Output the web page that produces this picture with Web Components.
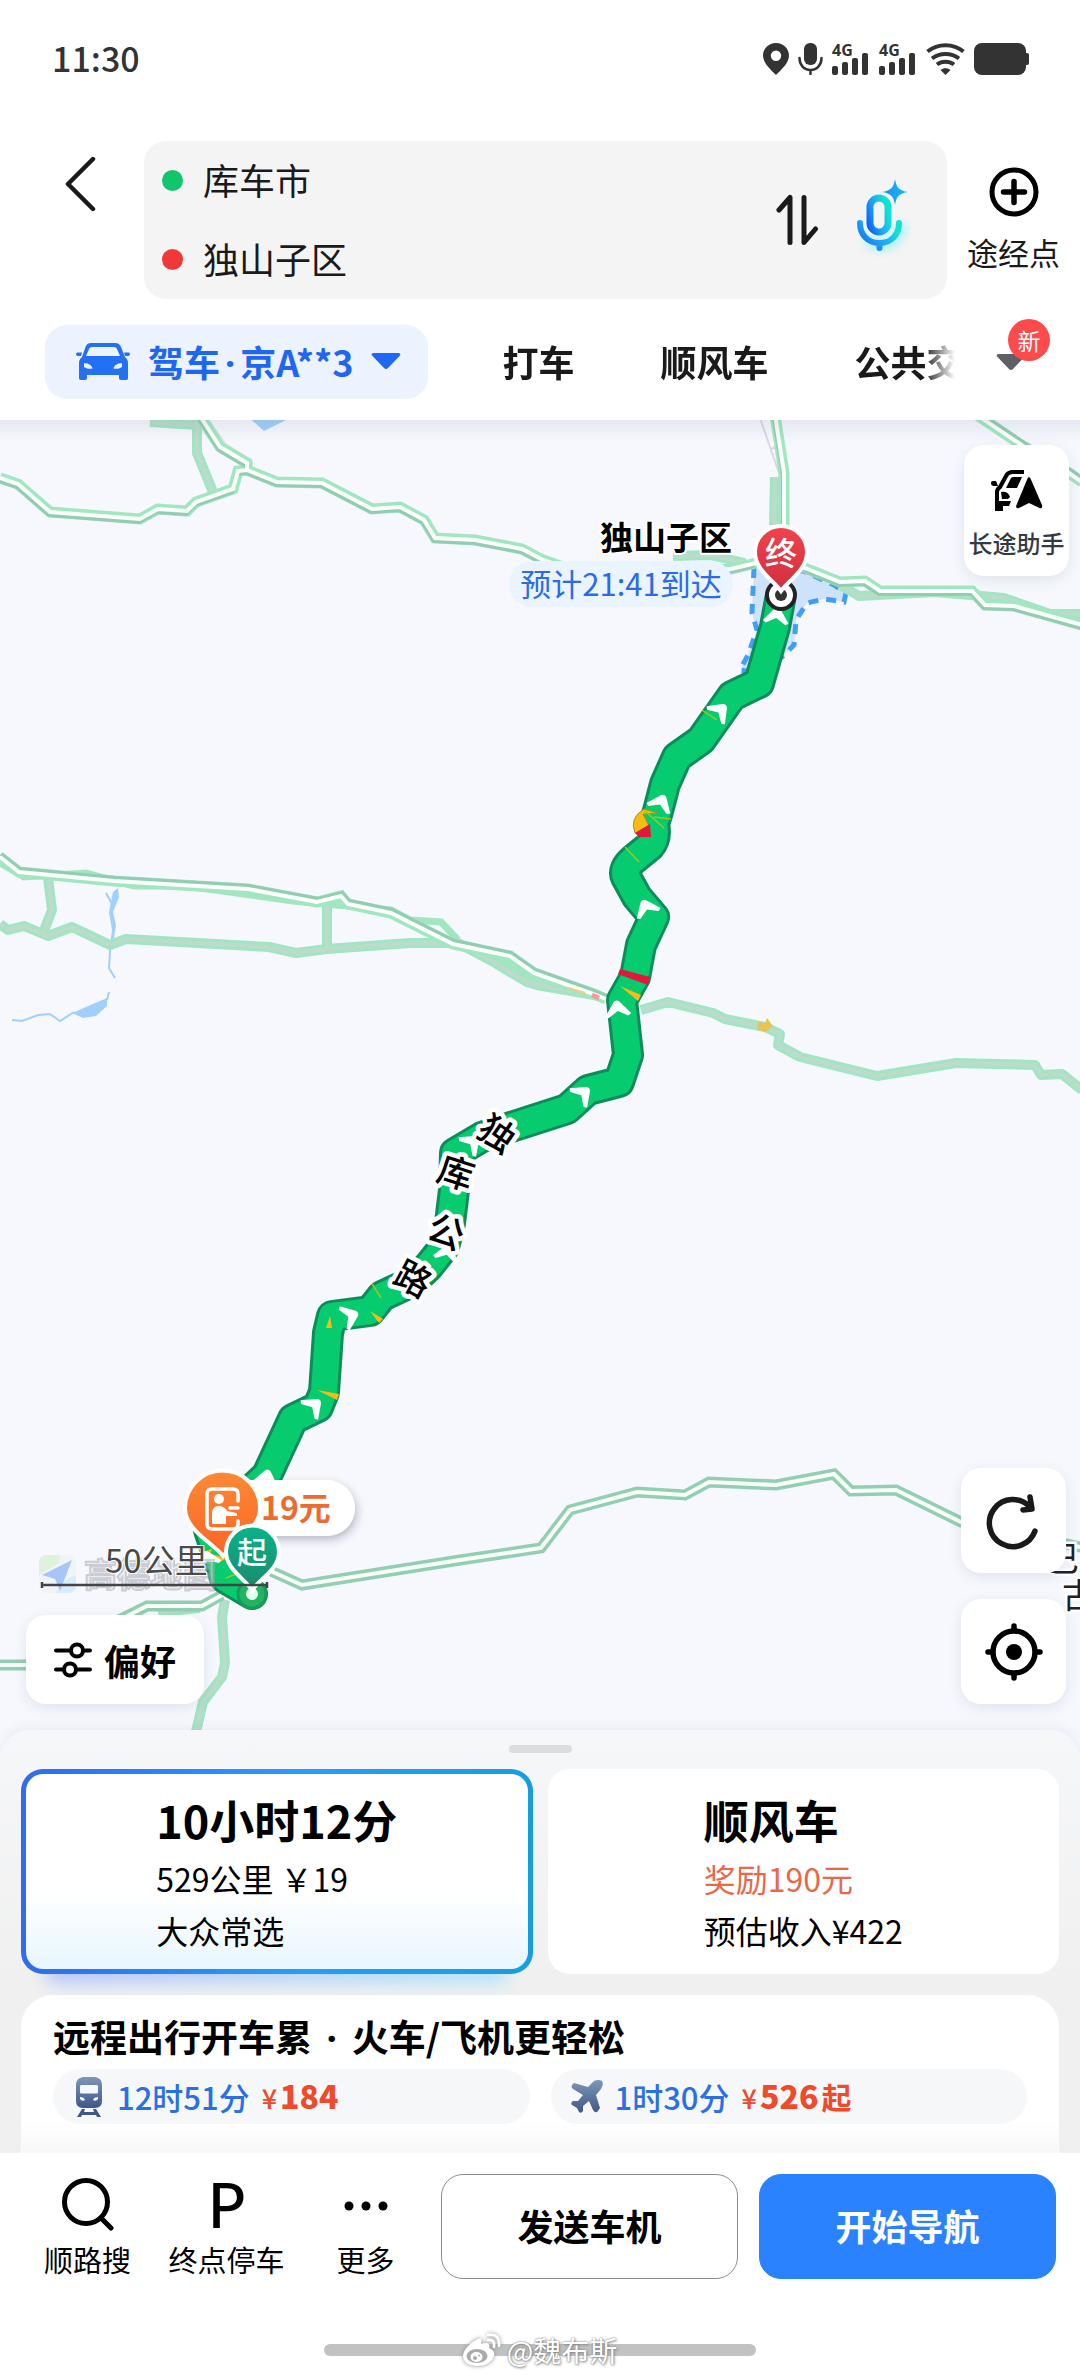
<!DOCTYPE html>
<html lang="zh-CN">
<head>
<meta charset="utf-8">
<meta name="viewport" content="width=device-width, initial-scale=1">
<title>路线规划</title>
<style>
  html, body { margin: 0; }
  body {
    min-height: 100vh;
    background: #fff;
    color: #111;
    font-family: "Noto Sans CJK SC", "Noto Sans", sans-serif;
  }
</style>
</head>
<body>
<route-page></route-page>

<script>
  // every element gets an open shadow root with its own css and html
  function define(tag, css, html) {
    const tpl = document.createElement('template');
    const reset = `
      * { box-sizing: border-box; }
      button, input { font: inherit; color: inherit; background: none; border: 0; padding: 0; margin: 0; outline: 0; }
      svg { display: block; flex: none; }
      .dot { font-family: "Noto Sans", sans-serif; line-height: 1; padding: 0 5px; }
    `;
    tpl.innerHTML = `<style>${reset}${css}</style>${html}`;

    customElements.define(tag, class extends HTMLElement {
      constructor() {
        super();
        this.attachShadow({ mode: 'open' }).appendChild(tpl.content.cloneNode(true));
      }
    });
  }

  /* ---------- status bar ---------- */

  const signal = `
    <div class="signal">
      <span>4G</span>
      <svg width="36" height="22" viewBox="0 0 36 22" fill="#333">
        <rect x="0" y="13" width="6" height="9" rx="2"/><rect x="10" y="9" width="6" height="13" rx="2"/>
        <rect x="20" y="5" width="6" height="17" rx="2"/><rect x="30" y="0" width="6" height="22" rx="2"/>
      </svg>
    </div>`;

  define('status-bar', `
    :host { display: flex; align-items: center; justify-content: space-between; height: 118px; padding: 0 50px 0 52px; color: #333; }
    time { font-size: 34px; line-height: 40px; font-weight: 500; padding-bottom: 2px; }
    .icons { display: flex; align-items: center; gap: 9px; }
    .signal { position: relative; width: 38px; height: 32px; display: flex; align-items: flex-end; }
    .signal span { position: absolute; left: 0; top: 0; font: 700 16px/14px "Noto Sans", sans-serif; }
  `, `
    <time>11:30</time>
    <div class="icons">
      <svg width="26" height="32" viewBox="0 0 26 32"><path fill="#333" fill-rule="evenodd" d="M13 0C5.500 0 0 5.600 0 12.500 0 20 8 27 13 32 18 27 26 20 26 12.500 26 5.600 20.500 0 13 0ZM13 7.500a5.200 5.200 0 1 1 0 10.400 5.200 5.200 0 0 1 0-10.400Z"/></svg>
      <svg width="25" height="32" viewBox="0 0 25 32" fill="none" stroke="#333" stroke-width="2.500" stroke-linecap="round"><rect x="6" y="0" width="13" height="22" rx="6" fill="#333" stroke="none"/><path d="M1.500 15c0 7 4.500 12 11 12s11-5 11-12M12.500 27v4"/></svg>
      ${signal}${signal}
      <svg width="39" height="32" viewBox="0 0 39 32" fill="none" stroke="#333" stroke-width="4"><path d="M1.500 8.500C12 0 27 0 37.500 8.500M6 15.500c8-6 19-6 27 0M11 21.500c5-3.800 12-3.800 17 0"/><path d="M14.500 27c3-2.500 7-2.500 10 0l-5 5z" fill="#333" stroke="none"/></svg>
      <svg width="56" height="32" viewBox="0 0 56 32" fill="#333"><rect width="52" height="32" rx="8"/><rect x="50" y="10" width="5" height="12" rx="2"/></svg>
    </div>
  `);

  /* ---------- start / destination box ---------- */

  define('route-search', `
    :host { display: flex; align-items: flex-start; padding-top: 23px; }
    .back { flex: none; width: 80px; margin: 16px 24px 0 40px; }
    .back svg { margin: 0 auto; }
    .box { flex: 1; min-width: 0; display: flex; align-items: center; padding: 0 36px 0 18px; background: #f4f4f4; border-radius: 22px; }
    .fields { flex: 1; min-width: 0; }
    label { display: flex; align-items: center; gap: 20px; height: 79px; }
    label i { width: 21px; height: 21px; border-radius: 50%; background: #12c46b; }
    label i.to { background: #f13737; }
    input { flex: 1; min-width: 0; font-size: 36px; line-height: 52px; padding-bottom: 3px; color: #1a1a1a; }
    .swap { margin-right: 36px; }
    .via { flex: none; width: 133px; padding-top: 26px; display: flex; flex-direction: column; align-items: center; gap: 13px; font-size: 31px; line-height: 44px; color: #1a1a1a; }
  `, `
    <button class="back" aria-label="返回">
      <svg width="32" height="54" viewBox="0 0 32 54" fill="none" stroke="#1a1a1a" stroke-width="4.500" stroke-linecap="round" stroke-linejoin="round"><path d="M29 2 4 27l25 25"/></svg>
    </button>
    <div class="box">
      <div class="fields">
        <label><i></i><input type="text" value="库车市" aria-label="起点"></label>
        <label><i class="to"></i><input type="text" value="独山子区" aria-label="终点"></label>
      </div>
      <button class="swap" aria-label="交换起终点">
        <svg width="44" height="52" viewBox="0 0 44 52" fill="none" stroke="#1a1a1a" stroke-width="5" stroke-linecap="round" stroke-linejoin="round"><path d="M4 16 15 3.500v45M29 3.500v45L40.500 35"/></svg>
      </button>
      <button aria-label="语音">
        <svg width="56" height="84" viewBox="0 0 56 84" fill="none">
          <defs>
            <linearGradient id="g" x1="0" y1="1" x2="1" y2=".4"><stop offset="0" stop-color="#0a62f5"/><stop offset=".5" stop-color="#1fa5fb"/><stop offset="1" stop-color="#0fe3d4"/></linearGradient>
            <linearGradient id="s" x1="0" y1="0" x2="1" y2="0"><stop offset="0" stop-color="#1f8cf8"/><stop offset="1" stop-color="#12bdf0"/></linearGradient>
            <filter id="b" x="-50%" y="-50%" width="200%" height="200%"><feGaussianBlur stdDeviation="5"/></filter>
          </defs>
          <path d="M12 60c10 14 30 10 36-14" stroke="#7feef0" stroke-width="10" opacity=".6" filter="url(#b)"/>
          <rect x="15" y="20" width="18" height="34" rx="9" stroke="url(#g)" stroke-width="7"/>
          <path d="M5 45c0 12 8 20 19.500 20S44 57 44 45M24.500 66v4" stroke="url(#g)" stroke-width="6" stroke-linecap="round"/>
          <path d="M40 1c1.500 9 4 11.500 13 13-9 1.500-11.500 4-13 13-1.500-9-4-11.500-13-13 9-1.500 11.500-4 13-13z" fill="url(#s)"/>
        </svg>
      </button>
    </div>
    <button class="via">
      <svg width="50" height="50" viewBox="0 0 50 50" fill="none" stroke="#000" stroke-width="5" stroke-linecap="round"><circle cx="25" cy="25" r="22"/><path d="M25 14.500v21M14.500 25h21" stroke-width="5.500"/></svg>
      途经点
    </button>
  `);

  /* ---------- travel modes ---------- */

  define('mode-tabs', `
    :host { display: flex; align-items: center; padding: 26px 0 21px 45px; font-size: 36px; line-height: 52px; font-weight: 700; color: #1a1a1a; }
    .current { flex: none; display: flex; align-items: center; height: 74px; padding: 0 27px 3px 31px; gap: 18px; background: #ecf2fe; border-radius: 22px; color: #1f66f2; }
    .list { flex: 1; min-width: 0; display: flex; overflow: hidden; margin-left: 31px; padding-bottom: 3px; mask-image: linear-gradient(90deg, #000 calc(100% - 32px), transparent); }
    .list button { flex: none; padding: 0 43px; }
    .list button:last-child { padding-right: 0; }
    .more { flex: none; position: relative; width: 125px; display: flex; padding: 0 0 0 41px; }
    .badge { position: absolute; left: 53px; top: -34px; width: 42px; height: 42px; border-radius: 50%; background: #fd4b4b; color: #fff; font-size: 23px; line-height: 42px; font-weight: 400; text-align: center; }
  `, `
    <button class="current">
      <svg width="54" height="40" viewBox="0 0 54 40" fill="#2370f4">
        <path fill-rule="evenodd" d="M15 2h24c3 0 5 1.500 6 4l4 10c2 1.500 3 3.500 3 6v15c0 1.500-1 2-2 2h-5c-1.500 0-2-1-2-2v-3H11v3c0 1-.5 2-2 2H5c-1.500 0-2-1-2-2V22c0-2.500 1-4.500 3-6l3.500-10c1-2.500 2.500-4 5.500-4Zm1 4c-1.500 0-2.500.8-3 2l-3 7h34l-3-7c-.5-1.200-1.500-2-3-2H16ZM8 22v4c3 2 6 2 8.500 1.500C15.500 24 13 22.500 8 22Zm38 0c-5 .5-7.500 2-8.500 5.500 2.500.5 5.500.5 8.500-1.500v-4Z"/>
        <path d="M0 13c0-1 1-1.500 2-1.500h4L5 15H2c-1 0-2-.8-2-2ZM54 13c0-1-1-1.500-2-1.500h-4l1 3.500h3c1 0 2-.8 2-2Z"/>
      </svg>
      <span>驾车<span class="dot">·</span>京A**3</span>
      <svg width="30" height="18" viewBox="0 0 30 18" fill="#1f66f2"><path d="M3 1h24c2.500 0 3 1.500 1.500 3L17 16c-1.300 1.300-2.700 1.300-4 0L1.500 4C0 2.500.5 1 3 1Z"/></svg>
    </button>
    <div class="list"><button>打车</button><button>顺风车</button><button>公共交</button></div>
    <button class="more" aria-label="更多方式">
      <svg width="30" height="18" viewBox="0 0 30 18" fill="#5f6066"><path d="M3 1h24c2.500 0 3 1.500 1.500 3L17 16c-1.300 1.300-2.700 1.300-4 0L1.500 4C0 2.500.5 1 3 1Z"/></svg>
      <span class="badge">新</span>
    </button>
  `);

  /* ---------- map ---------- */

  define('map-button', `
    :host { display: block; }
    button { display: flex; align-items: center; justify-content: center; gap: 12px; width: 100%; height: 100%; background: #fff; border-radius: 20px; box-shadow: 0 4px 14px rgba(40, 50, 80, .1); }
    :host([stack]) button { flex-direction: column; gap: 14px; padding-top: 8px; }
  `, `<button><slot></slot></button>`);

  // highways: light casing, a darker carriageway on one side, white centre
  const lowerDark = [
    'M0 478 18 484 50 512 140 519 158 509 187 511 196 502 233 489 238 471 247 470 277 482 322 483 372 509 400 507 424 520 435 538 475 540 522 549 543 560 600 580 731 569 756 563',
    'M200 416 220 447 247 463V470',
    'M775 415 784 473V540',
    'M800 566 840 582 865 581 880 591H972L985 605 1014 606 1082 625'
  ];
  const upperDark = [
    'M0 857 19 872 114 881 248 889 317 902 341 896 348 904 391 913 453 944 510 956 534 973 591 993 606 999',
    'M977 415 1023 446 1069 473 1082 482'
  ];
  const darkways = [
    'M255 1560 273 1572 302 1585 460 1560 541 1548 570 1510 637 1492 685 1495 709 1482 776 1485 834 1474 851 1491 896 1490 961 1522 1085 1548',
    'M0 1665H26L123 1618 147 1606H202L222 1595'
  ];
  const byways = [
    'M150 422 198 425',
    'M197 422V453L213 492',
    'M0 924 8 930 24 926 48 936 72 927 110 945 126 939 269 947 296 953 327 949 410 943 458 943 492 961 527 982 537 985 600 996',
    'M48 878 52 910 43 933',
    'M327 904V949',
    'M641 1010 668 1002 713 1013 725 1019 765 1027 780 1034 778 1045 800 1057 877 1076 956 1063 1035 1065 1041 1075 1062 1074 1082 1090',
    'M225 1600 222 1617 225 1663 222 1677 203 1702 194 1740',
    'M158 1612 200 1608',
    'M673 556 710 555 745 563',
    'M775 477 774 525',
    'M840 585 859 596 935 592 1004 598 1050 614H1082'
  ];
  const feeders = [
    'M0 863 24 877 86 873 134 886 186 886 293 901 391 910 453 944',
    'M391 910 410 920 441 922 458 940',
    'M497 958 520 972 536 978'
  ];
  const highways = [...lowerDark, ...upperDark];
  const draw = (list, attrs) => list.map(d => `<path d="${d}" ${attrs}/>`).join('');

  const route = 'M780 600 775 627 759 683 732 696 701 740 677 757 665 784 658 811 654 824Q657 838 650 846L634 859Q622 869 626 877L637 897 654 917 641 945 635 977 622 1000 628 1055 619 1082 588 1090 567 1109 511 1127 482 1137 455 1153 454 1190 450 1223 444 1247 428 1267 412 1282 382 1296 370 1311 332 1316 328 1333 324 1392 318 1407 293 1419 267 1475 209 1530 225 1578 252 1594';

  const arrows = [
    [777, 613, 8], [722, 709, 45], [662, 800, 24], [645, 905, -24], [617, 1006, -8], [585, 1092, 48],
    [474, 1141, 48], [448, 1250, 15], [353, 1315, 68], [316, 1404, 48], [267, 1475, 12], [206, 1556, -20]
  ].map(([x, y, r]) => `<path transform="translate(${x} ${y}) rotate(${r})" d="M-13 9-3-4Q0-7 3-4L13 9 10 11 0 5-10 11Z"/>`).join('');

  const roadName = [['独', 497, 1134, 35], ['库', 456, 1173, 18], ['公', 446, 1232, 22], ['路', 413, 1279, 28]]
    .map(([t, x, y, r]) => `<text transform="translate(${x} ${y}) rotate(${r})" y="13">${t}</text>`).join('');

  define('route-map', `
    :host { display: block; position: relative; overflow: hidden; background: #f6f8fe; }
    .canvas { position: absolute; inset: 0; width: 100%; height: 100%; }
    .shade { position: absolute; inset: 0 0 auto; height: 22px; background: linear-gradient(rgba(60, 70, 100, .09), transparent); }
    text { font-family: "Noto Sans CJK SC", sans-serif; }
    map-button { position: absolute; }
    .helper { top: 25px; right: 11px; width: 105px; height: 131px; font-size: 24px; line-height: 34px; font-weight: 500; color: #333a45; }
    .prefer { left: 26px; bottom: 56px; width: 178px; height: 89px; font-size: 36px; line-height: 52px; font-weight: 700; color: #000; }
    .refresh, .locate { right: 14px; width: 105px; height: 105px; }
    .refresh { bottom: 187px; }
    .locate { bottom: 56px; }
  `, `
    <svg class="canvas" viewBox="0 419 1080 1342" preserveAspectRatio="xMidYMid slice" fill="none">
      <defs>
        <linearGradient id="red" x1="0" y1="0" x2="0" y2="1"><stop offset="0" stop-color="#f0444d"/><stop offset="1" stop-color="#cf2f3e"/></linearGradient>
        <linearGradient id="orange" x1="0" y1="0" x2="0" y2="1"><stop offset="0" stop-color="#fd8a35"/><stop offset="1" stop-color="#fb6526"/></linearGradient>
        <linearGradient id="teal" x1="0" y1="0" x2="0" y2="1"><stop offset="0" stop-color="#08b48a"/><stop offset="1" stop-color="#1b8a6c"/></linearGradient>
        <filter id="shadow" x="-20%" y="-20%" width="150%" height="160%"><feDropShadow dx="2" dy="4" stdDeviation="4" flood-color="#334" flood-opacity=".3"/></filter>
      </defs>

      <!-- water -->
      <g fill="#a0cffc">
        <path d="M246 415 264 431 288 419V415Z"/>
        <path d="M118 888 113 892 109 912 112 930 110 945 113 945 116 925 113 912 119 897Z"/>
        <path d="M72 1013 107 998V1006L96 1016 83 1018Z"/>
      </g>
      <path d="M106 893 112 904M110 950 109 968 115 978M109 992 107 1000M12 1020 22 1021 38 1015 50 1014 60 1021 74 1012" stroke="#a0cffc" stroke-width="2"/>

      <!-- district outline -->
      <path d="M754 568 752 613 757 630 748 655 740 670 752 672 782 657 794 645 796 620 807 603 824 599 844 602 846 593 834 585 803 571Z" fill="#cfe2fb" stroke="#3f9ff3" stroke-width="5" stroke-dasharray="10 8"/>

      <!-- roads -->
      <path d="M759 415 779 473M770 449 777 447" stroke="#d7d9e6" stroke-width="2"/>
      <path d="M205 416 225 444 249 460" stroke="#e2e2e8" stroke-width="3"/>
      ${draw(feeders, 'stroke="#a2e6c0" stroke-width="7"')}
      ${draw(byways, 'stroke="#a2e5c1" stroke-width="10" stroke-linejoin="round"')}
      ${draw(byways, 'stroke="#bbdccd" stroke-width="4" stroke-linejoin="round"')}
      ${draw(highways, 'stroke="#a2e6c0" stroke-width="11"')}
      ${draw(lowerDark, 'stroke="#93ccb0" stroke-width="4" transform="translate(-1 3)"')}
      ${draw(upperDark, 'stroke="#93ccb0" stroke-width="4" transform="translate(1 -3)"')}
      ${draw(highways, 'stroke="#fbfffb" stroke-width="4"')}
      ${draw(darkways, 'stroke="#94ceb1" stroke-width="11"')}
      ${draw(darkways, 'stroke="#f6fff8" stroke-width="4"')}
      <path d="M758 1022 765 1023 767 1018 773 1026 766 1032 757 1030Z" fill="#e8c458"/>
      <path d="M592 995 599 998" stroke="#f59a98" stroke-width="5"/>
      <path d="M568 988 585 993" stroke="#e9cf86" stroke-width="2"/>

      <!-- route -->
      <path d="${route}" stroke="#0b8c5a" stroke-width="32" stroke-linejoin="round" stroke-linecap="round"/>
      <path d="${route}" stroke="#07cb6f" stroke-width="26" stroke-linejoin="round" stroke-linecap="round"/>
      <g fill="#f3bd14">
        <path d="M644 809Q629 818 635 833L649 826 643 814 657 813Z" stroke="#b58e12" stroke-width="1"/>
        <path d="M620 986 641 995 638 1001Z"/>
        <path d="M370 1311 383 1319 379 1323Z"/>
        <path d="M326 1328 330 1316 332 1328Z"/>
        <path d="M317 1390 339 1394 337 1400Z"/>
        <path d="M203 1552 212 1549 208 1562 220 1562 227 1558Z"/>
      </g>
      <path d="M645 811 664 828M654 817 671 819M625 847 639 862M702 710 717 720M372 1284 381 1298M226 1578 236 1574" stroke="#9acb1c" stroke-width="1.500"/>
      <path d="M620 969 650 977 648 985 618 974ZM635 833 650 824 651 837 639 837Z" fill="#e5163b"/>
      <g fill="#fff">${arrows}</g>
      <g font-size="36" font-weight="500" text-anchor="middle" fill="#000" stroke="#fff" stroke-width="9" stroke-linejoin="round" paint-order="stroke">${roadName}</g>

      <!-- destination -->
      <rect x="509" y="561" width="224" height="46" rx="23" fill="#e9f4fe"/>
      <text x="621" y="596" font-size="31" text-anchor="middle" fill="#2d6be6">预计21:41到达</text>
      <text x="666" y="550" font-size="33" font-weight="700" text-anchor="middle" fill="#000" stroke="#fff" stroke-width="4" stroke-linejoin="round" paint-order="stroke">独山子区</text>
      <circle cx="781" cy="595" r="14" fill="#fff" stroke="#222" stroke-width="4"/>
      <circle cx="781" cy="595" r="6" fill="#333"/>
      <path d="M781 591C773 580 755 570 755 552a26 26 0 0 1 52 0C807 570 789 580 781 591Z" fill="url(#red)" stroke="#fff" stroke-width="4"/>
      <text x="781" y="565" font-size="32" font-weight="500" text-anchor="middle" fill="#fff">终</text>

      <!-- start -->
      <circle cx="252" cy="1594" r="14" fill="#21b463" stroke="#1a9a58" stroke-width="3"/>
      <circle cx="252" cy="1594" r="6" fill="#e6fff0"/>
      <path d="M223 1480H327a28 28 0 0 1 0 56H223Z" fill="#fff" filter="url(#shadow)"/>
      <text x="261" y="1520" font-size="32" font-weight="700" fill="#ec6b2f">19元</text>
      <path d="M223 1556C212 1542 185 1530 185 1508a37.500 37.500 0 0 1 75 0C260 1530 234 1542 223 1556Z" fill="url(#orange)" stroke="#fff" stroke-width="4"/>
      <g stroke="#fff" stroke-width="3.500" stroke-linecap="round" stroke-linejoin="round">
        <path d="M238 1501V1494Q238 1489 233 1489H212Q207 1489 207 1494V1524Q207 1529 212 1529H233Q238 1529 238 1524V1521"/>
        <circle cx="219" cy="1499" r="5" fill="#fff" stroke="none"/>
        <path d="M213 1523V1512Q214 1507 219 1507 223 1507 227 1512L236 1514V1515H227L225 1514V1523Z" fill="#fff" stroke-width="2"/>
        <path d="M230 1508H238"/>
      </g>
      <path d="M252 1590C245 1579 226 1569 226 1552a26.500 26.500 0 0 1 53 0C279 1569 260 1579 252 1590Z" fill="url(#teal)" stroke="#fff" stroke-width="4"/>
      <text x="252" y="1563" font-size="30" font-weight="500" text-anchor="middle" fill="#fff">起</text>

      <!-- logo and scale -->
      <g opacity=".55">
        <rect x="39" y="1555" width="37" height="38" rx="8" fill="#eaf2f6"/>
        <path d="M39 1575V1563Q39 1555 47 1555H60V1562Z" fill="#c9efc4"/>
        <path d="M76 1575V1585Q76 1593 68 1593H55L66 1580Z" fill="#bfe4fb"/>
        <path d="M72 1560 42 1575 55 1579 60 1591Z" fill="#6b9df3"/>
        <text x="84" y="1587" font-size="33" font-weight="700" fill="#dfe1e8" stroke="#a9abb2" stroke-width="2">高德地图</text>
      </g>
      <text x="105" y="1573" font-size="33" fill="#4a4a4a" stroke="#fff" stroke-width="2" paint-order="stroke">50公里</text>
      <path d="M42 1582V1588M267 1582V1588M42 1585H267" stroke="#444" stroke-width="2.500"/>

      <g font-size="34" fill="#222" stroke="#fff" stroke-width="5" paint-order="stroke">
        <text x="1045" y="1571">巴</text>
        <text x="1062" y="1608">古</text>
      </g>
    </svg>
    <div class="shade"></div>

    <map-button class="helper" stack>
      <svg width="52" height="42" viewBox="0 0 52 42">
        <path d="M6 40V22Q6 19 9 17L15 6Q17 2 22 2H33" fill="none" stroke="#000" stroke-width="4"/>
        <path d="M15 18 20 8Q21 7 23 7H31L26 18ZM10 22Q17 21 19 27L17 29H11ZM6 31H20L18 36H12V41H4V33ZM0 13Q0 11 2 11H5L7 16H3Q0 16 0 13Z" fill="#000"/>
        <path d="M36.500 8.500Q38 5.500 39.500 8.500L51 35Q52 39 48.500 38L38 33 28 38Q24 39 25.500 35Z" fill="#000"/>
      </svg>
      <span>长途助手</span>
    </map-button>
    <map-button class="prefer">
      <svg width="38" height="36" viewBox="0 0 38 36" fill="none" stroke="#000" stroke-width="4" stroke-linecap="round"><path d="M2 8.500H15M31 8.500H36M2 27.500H8M24 27.500H36"/><circle cx="23" cy="8.500" r="6"/><circle cx="16" cy="27.500" r="6"/></svg>
      <span>偏好</span>
    </map-button>
    <map-button class="refresh" aria-label="刷新">
      <svg width="58" height="58" viewBox="0 0 58 58" fill="none" stroke="#1a1a1a" stroke-width="5.500" stroke-linecap="round" stroke-linejoin="round"><path d="M45 15A23.500 23.500 0 1 0 50 39"/><path d="M45 5 47 17 38 18"/></svg>
    </map-button>
    <map-button class="locate" aria-label="定位">
      <svg width="60" height="60" viewBox="0 0 60 60" fill="none" stroke="#000" stroke-width="5.500" stroke-linecap="round"><circle cx="30" cy="30" r="21"/><path d="M30 4V8M30 52V56M4 30H8M52 30H56"/><circle cx="30" cy="30" r="8" fill="#000" stroke="none"/></svg>
    </map-button>
  `);

  /* ---------- route sheet ---------- */

  define('route-card', `
    :host { display: flex; position: relative; flex: 1; min-width: 0; }
    button { flex: 1; min-width: 0; min-height: 205px; display: flex; align-items: center; justify-content: center; background: #fff; border: 5px solid #fff; border-radius: 22px; text-align: left; }
    :host([selected]) button { position: relative; border-color: transparent; background: linear-gradient(#fff 60%, #e8f6fe) padding-box, linear-gradient(90deg, #2f6cee, #2a9cf8 55%, #169de0) border-box; }
    :host([selected])::before { content: ""; position: absolute; inset: auto 24px -10px; height: 24px; border-radius: 12px; background: linear-gradient(90deg, #b9c6fa, #b7e6f8); filter: blur(8px); }
    .title { display: block; font-size: 45px; line-height: 64px; font-weight: 700; color: #000; }
    .body { display: block; font-size: 32px; line-height: 52px; color: #000; }
    ::slotted(*) { display: block; }
  `, `<button><span><span class="title"><slot name="title"></slot></span><span class="body"><slot></slot></span></span></button>`);

  define('travel-chip', `
    :host { display: flex; flex: 1; min-width: 0; }
    a { flex: 1; display: flex; align-items: center; height: 55px; padding: 0 20px; gap: 12px; border-radius: 28px; background: #f5f7f9; text-decoration: none; white-space: nowrap; font-size: 31px; line-height: 46px; font-weight: 500; color: #2b6fe3; }
    .price { display: flex; align-items: baseline; gap: 3px; color: #ee4a2b; font-size: 30px; font-weight: 700; }
  `, `<a href="#"><slot name="icon"></slot><slot></slot><span class="price"><slot name="price"></slot></span></a>`);

  define('route-sheet', `
    :host { display: block; position: relative; margin-top: -30px; padding: 15px 21px 0; border-radius: 30px 30px 0 0; background: linear-gradient(#f6f7f9, #f0f0f0 60%); box-shadow: 0 -3px 12px rgba(60, 70, 100, .07); }
    .handle { width: 63px; height: 8px; margin: 0 auto 16px; border-radius: 4px; background: #dcdddf; }
    .cards { display: flex; gap: 15px; }
    .reward { color: #e8694a; }
    .panel { margin-top: 21px; padding: 14px 32px 29px; border-radius: 32px 32px 0 0; background: linear-gradient(#fff 80%, #f8f8f8); }
    h2 { margin: 0 0 6px; font-size: 37px; line-height: 54px; font-weight: 700; color: #000; }
    .chips { display: flex; gap: 21px; }
    small { font-size: 27px; font-weight: 500; }
    b { font-size: 32px; }
  `, `
    <div class="handle"></div>
    <div class="cards">
      <route-card selected><span slot="title">10小时12分</span><span>529公里 ￥19</span><span>大众常选</span></route-card>
      <route-card><span slot="title">顺风车</span><span class="reward">奖励190元</span><span>预估收入¥422</span></route-card>
    </div>
    <section class="panel">
      <h2>远程出行开车累<span class="dot"> · </span>火车/飞机更轻松</h2>
      <div class="chips">
        <travel-chip>
          <svg slot="icon" width="32" height="40" viewBox="0 0 32 40"><defs><linearGradient id="t" x1="0" y1="0" x2="0" y2="1"><stop offset="0" stop-color="#7d96b8"/><stop offset="1" stop-color="#3e5789"/></linearGradient></defs><path fill="url(#t)" fill-rule="evenodd" d="M10 0H22Q29 1 29 8V24Q29 31 22 31H10Q3 31 3 24V8Q3 1 10 0ZM8 8Q7 8 7 10V15Q7 16.500 8 16.500H24Q25 16.500 25 15V10Q25 8 24 8ZM7 20V22Q9 25 12 23 11 20 7 20ZM25 20Q21 20 20 23 23 25 25 22Z"/><path d="M9 32H12L11 35H21L20 32H23L28 40H24L23 38H9L8 40H4Z" fill="#3e5789"/></svg>
          <span>12时51分</span>
          <small slot="price">¥</small><b slot="price">184</b>
        </travel-chip>
        <travel-chip>
          <svg slot="icon" width="32" height="33" viewBox="0 0 32 33"><defs><linearGradient id="p" x1="0" y1="0" x2="0" y2="1"><stop offset="0" stop-color="#7d96b8"/><stop offset="1" stop-color="#3e5789"/></linearGradient></defs><path fill="url(#p)" d="M31 1Q33 4 30 9L25 15 29 28 26 32Q24 33 22 30L18 21 12 26 12 31Q10 34 8 32L6 28 1 25Q-1 23 2 21L7 21 12 15 2 9Q0 8 1 5L3 3 17 7 23 1Q28-1 31 1Z"/></svg>
          <span>1时30分</span>
          <small slot="price">¥</small><b slot="price">526</b><span slot="price">起</span>
        </travel-chip>
      </div>
    </section>
  `);

  /* ---------- bottom bar ---------- */

  define('tool-item', `
    :host { display: block; width: 139px; }
    button { width: 100%; display: flex; flex-direction: column; align-items: center; font-size: 29px; line-height: 42px; color: #000; white-space: nowrap; }
    .icon { height: 64px; display: flex; align-items: center; }
  `, `<button><span class="icon"><slot name="icon"></slot></span><slot></slot></button>`);

  define('action-bar', `
    :host { display: block; position: relative; background: #fff; padding-bottom: 20px; }
    .row { display: flex; gap: 6px; padding: 21px 24px 64px 18px; }
    .tools { display: flex; }
    .letter { font: 500 62px/60px Lato, "Noto Sans", sans-serif; padding-bottom: 4px; }
    .cta { flex: 1; display: flex; gap: 21px; }
    .cta button { flex: 1; height: 105px; padding-bottom: 3px; border-radius: 22px; border: 1px solid #8c8c8c; font-size: 36px; line-height: 52px; font-weight: 700; color: #000; }
    .cta .go { background: #2b82fe; border-color: #2b82fe; color: #fff; }
    .home { width: 40%; height: 12px; margin: 0 auto; border-radius: 6px; background: #c1c3c3; }
    .mark { position: absolute; left: 0; right: 0; bottom: 5px; display: flex; align-items: center; justify-content: center; gap: 6px; font-size: 28px; line-height: 42px; color: #fff; text-shadow: 0 0 2px #777, 1px 1px 3px #888; }
    .mark svg { filter: drop-shadow(0 0 2px #888); }
  `, `
    <div class="row">
      <div class="tools">
        <tool-item><svg slot="icon" width="52" height="58" viewBox="0 0 52 58" fill="none" stroke="#000" stroke-width="5" stroke-linecap="round"><circle cx="24" cy="25" r="21.500"/><path d="M39 41 49 51"/></svg>顺路搜</tool-item>
        <tool-item><span slot="icon" class="letter">P</span>终点停车</tool-item>
        <tool-item><svg slot="icon" width="44" height="10" viewBox="0 0 44 10"><circle cx="5" cy="5" r="4.500"/><circle cx="22" cy="5" r="4.500"/><circle cx="39" cy="5" r="4.500"/></svg>更多</tool-item>
      </div>
      <div class="cta"><button>发送车机</button><button class="go">开始导航</button></div>
    </div>
    <div class="home"></div>
    <div class="mark">
      <svg width="38" height="34" viewBox="0 0 38 34">
        <path fill="#fff" d="M13 7C17 4 20 6 18 11 23 9 28 10 26 15 30 17 32 19 31 23 29 30 21 33 14 33 6 33 0 29 0 23 0 17 7 10 13 7Z"/>
        <ellipse cx="14" cy="23" rx="10.500" ry="7" fill="#a9abab"/><ellipse cx="13.500" cy="24" rx="6" ry="5" fill="#fff"/><circle cx="12" cy="25" r="2" fill="#a9abab"/><circle cx="16" cy="22.500" r="1" fill="#a9abab"/>
        <path d="M25 7Q32 6 31 14M25 2Q37 0 36 13" fill="none" stroke="#fff" stroke-width="2.500" stroke-linecap="round"/>
      </svg>
      @魏布斯
    </div>
  `);

  define('route-page', `
    :host { display: flex; flex-direction: column; min-height: 100vh; }
    header { position: relative; background: #fff; box-shadow: 0 2px 8px rgba(60, 70, 100, .1); }
    route-map { flex: 1; min-height: 600px; }
  `, `
    <header>
      <status-bar></status-bar>
      <route-search></route-search>
      <mode-tabs></mode-tabs>
    </header>
    <route-map></route-map>
    <route-sheet></route-sheet>
    <action-bar></action-bar>
  `);
</script>
</body>
</html>
